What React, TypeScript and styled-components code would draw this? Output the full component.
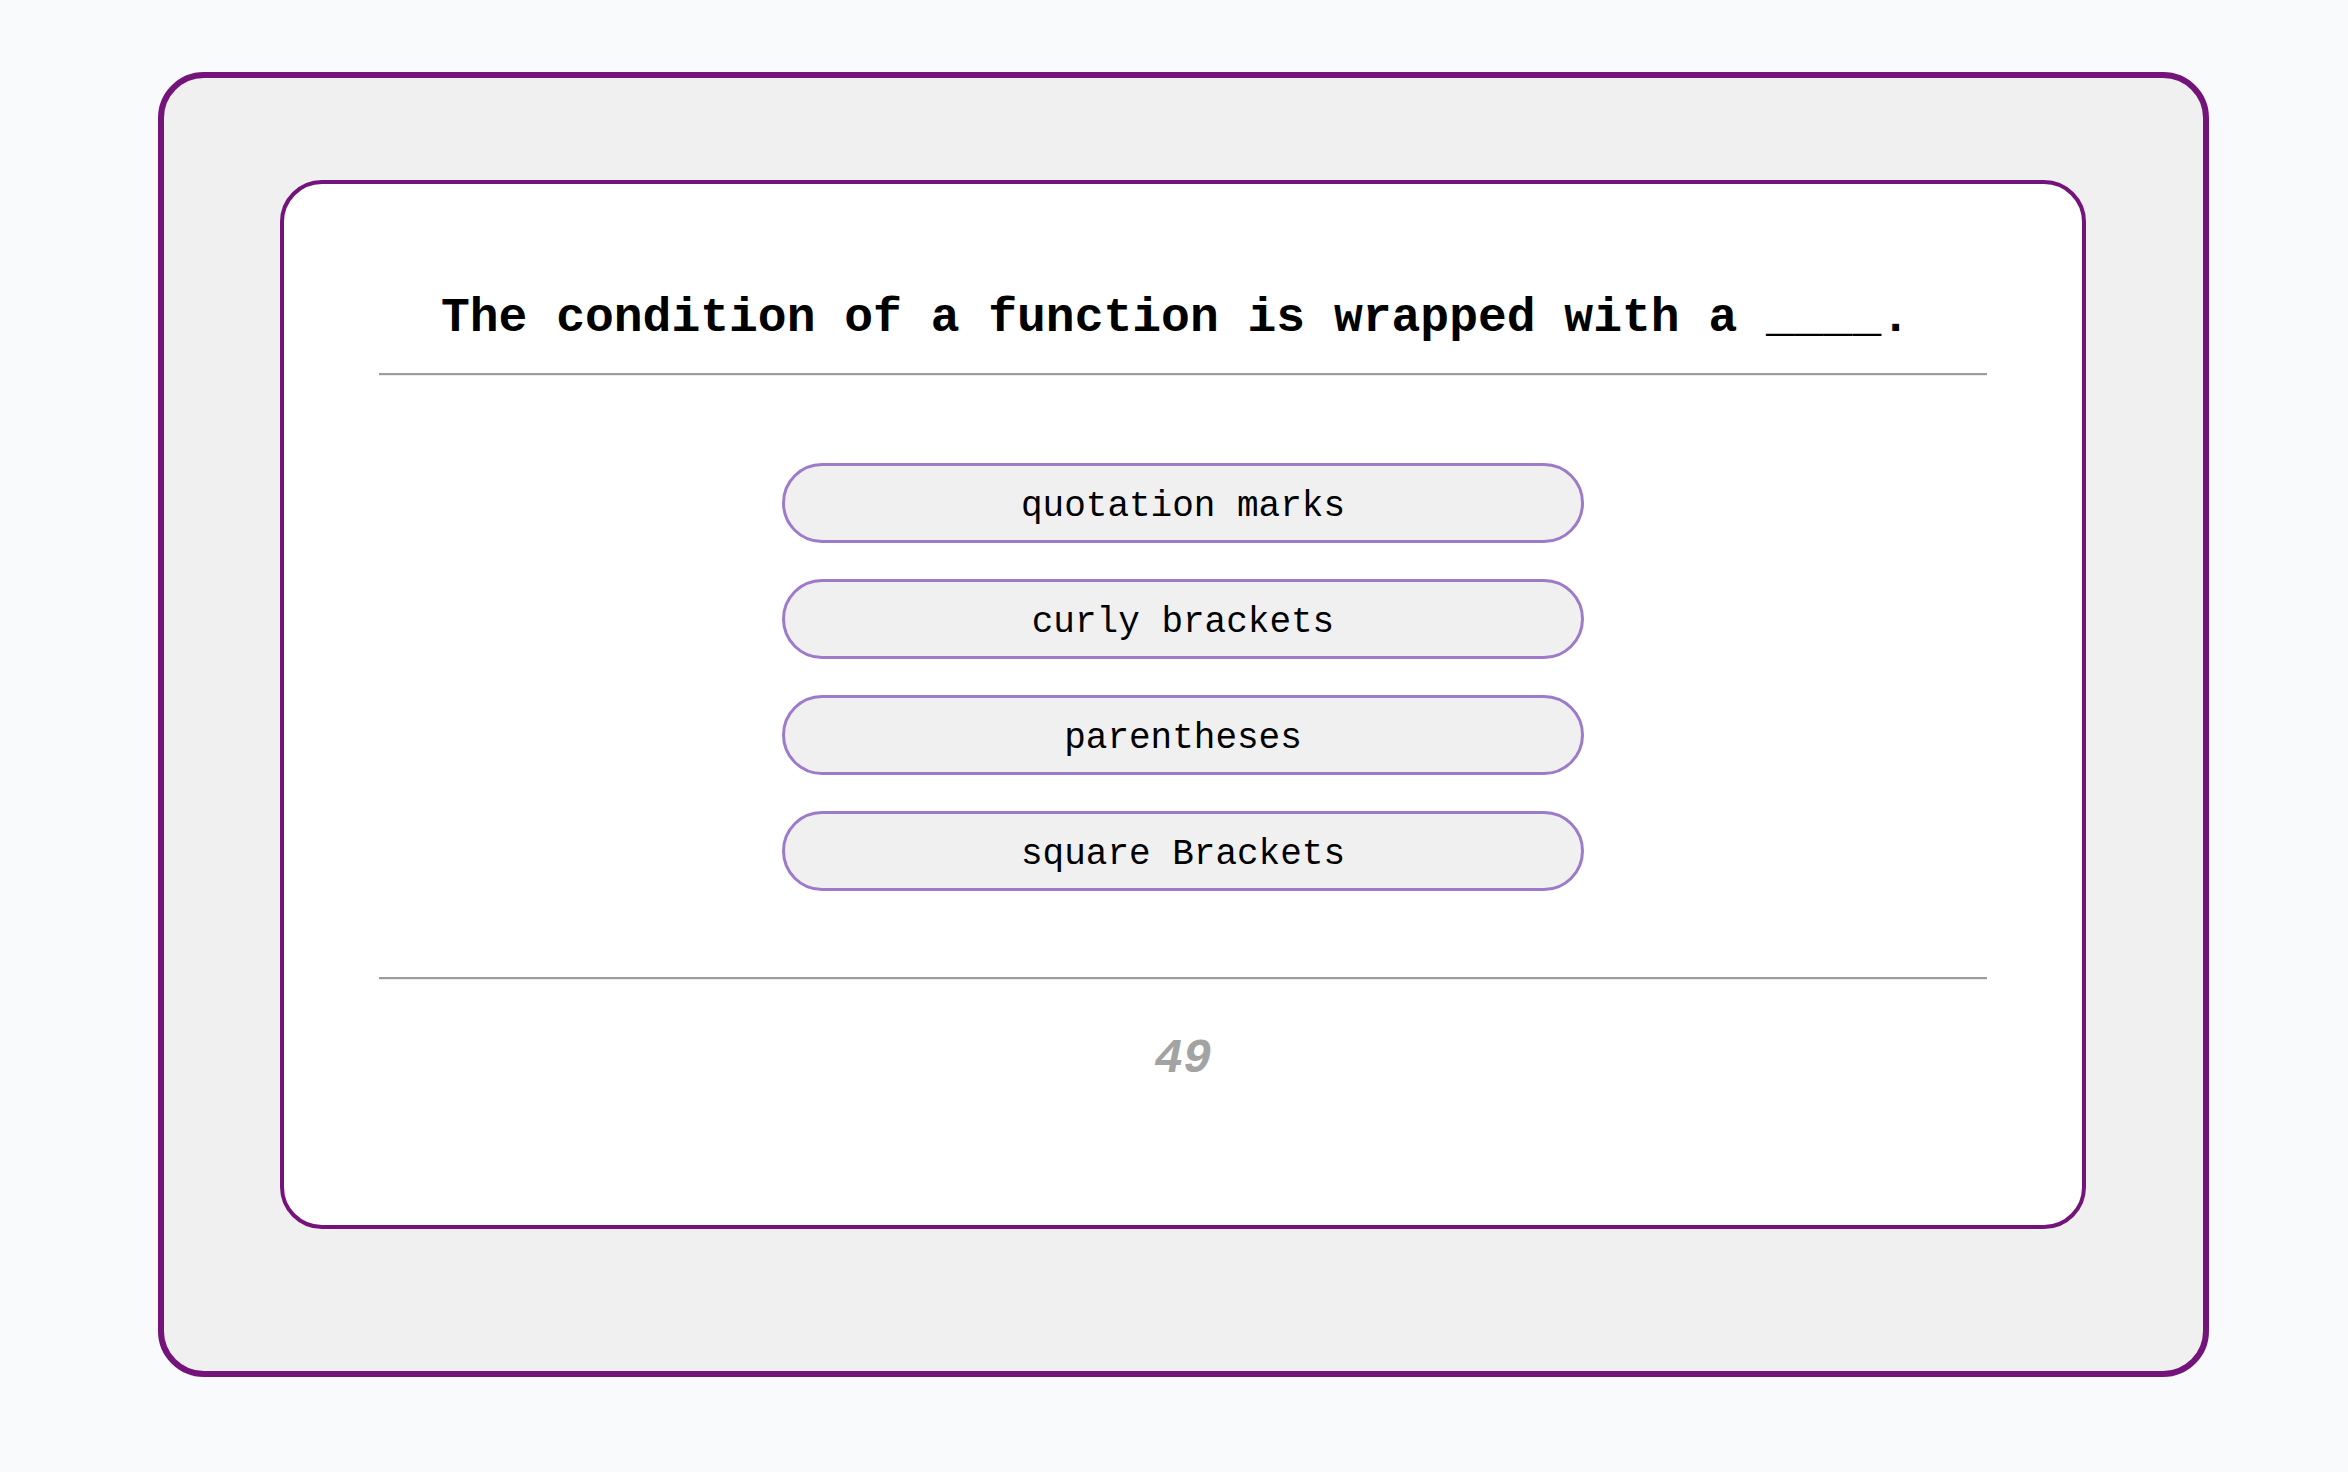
import React from "react";
import styled, { createGlobalStyle } from "styled-components";

const MONO = `"Courier New", Courier, "Nimbus Mono PS", "Nimbus Mono L", FreeMono, "Liberation Mono", monospace`;

const GlobalStyle = createGlobalStyle`
  html, body {
    margin: 0;
    padding: 0;
    background: #f9fafb;
  }
  * { box-sizing: border-box; }
`;

const Page = styled.main`
  padding: 72px 139px 95px 158px;
  font-family: ${MONO};
`;

const Frame = styled.section`
  width: 2051px;
  border: 6px solid #74147a;
  border-radius: 46px;
  background: #f0f0f0;
  padding: 102px 117px 142px 116px;
`;

const Card = styled.div`
  border: 4px solid #74147a;
  border-radius: 42px;
  background: #ffffff;
  padding: 107px 95px 139px;
  display: flex;
  flex-direction: column;
  align-items: stretch;
`;

const Question = styled.h1`
  margin: 0;
  padding-right: 15px;
  font-family: ${MONO};
  font-size: 48px;
  line-height: 54px;
  font-weight: 700;
  color: #000;
  text-align: center;
  white-space: nowrap;
`;

const Divider = styled.hr<{ $top: number }>`
  margin: ${(p) => p.$top}px 0 0;
  height: 0;
  border: none;
  border-top: 2px solid #9c9c9c;
  border-bottom: 1px solid #ececec;
`;

const Options = styled.ul`
  list-style: none;
  margin: 87px 0 0;
  padding: 0;
  display: flex;
  flex-direction: column;
  align-items: center;
  gap: 36px;
`;

const Option = styled.button`
  width: 802px;
  height: 80px;
  border: 3px solid #9d7bc9;
  border-radius: 40px;
  background: #f0f0f0;
  font-family: ${MONO};
  font-size: 36px;
  color: #000;
  display: flex;
  align-items: center;
  justify-content: center;
  cursor: pointer;
  padding: 6px 0 0;
`;

const Counter = styled.div`
  margin-top: 52px;
  font-size: 48px;
  line-height: 54px;
  font-weight: 700;
  font-style: italic;
  color: #a3a3a3;
  text-align: center;
`;

const answers = ["quotation marks", "curly brackets", "parentheses", "square Brackets"];

export default function App() {
  return (
    <>
      <GlobalStyle />
      <Page>
        <Frame>
          <Card>
            <Question>The condition of a function is wrapped with a ____.</Question>
            <Divider $top={28} />
            <Options>
              {answers.map((a) => (
                <li key={a}>
                  <Option type="button">{a}</Option>
                </li>
              ))}
            </Options>
            <Divider $top={86} />
            <Counter>49</Counter>
          </Card>
        </Frame>
      </Page>
    </>
  );
}
